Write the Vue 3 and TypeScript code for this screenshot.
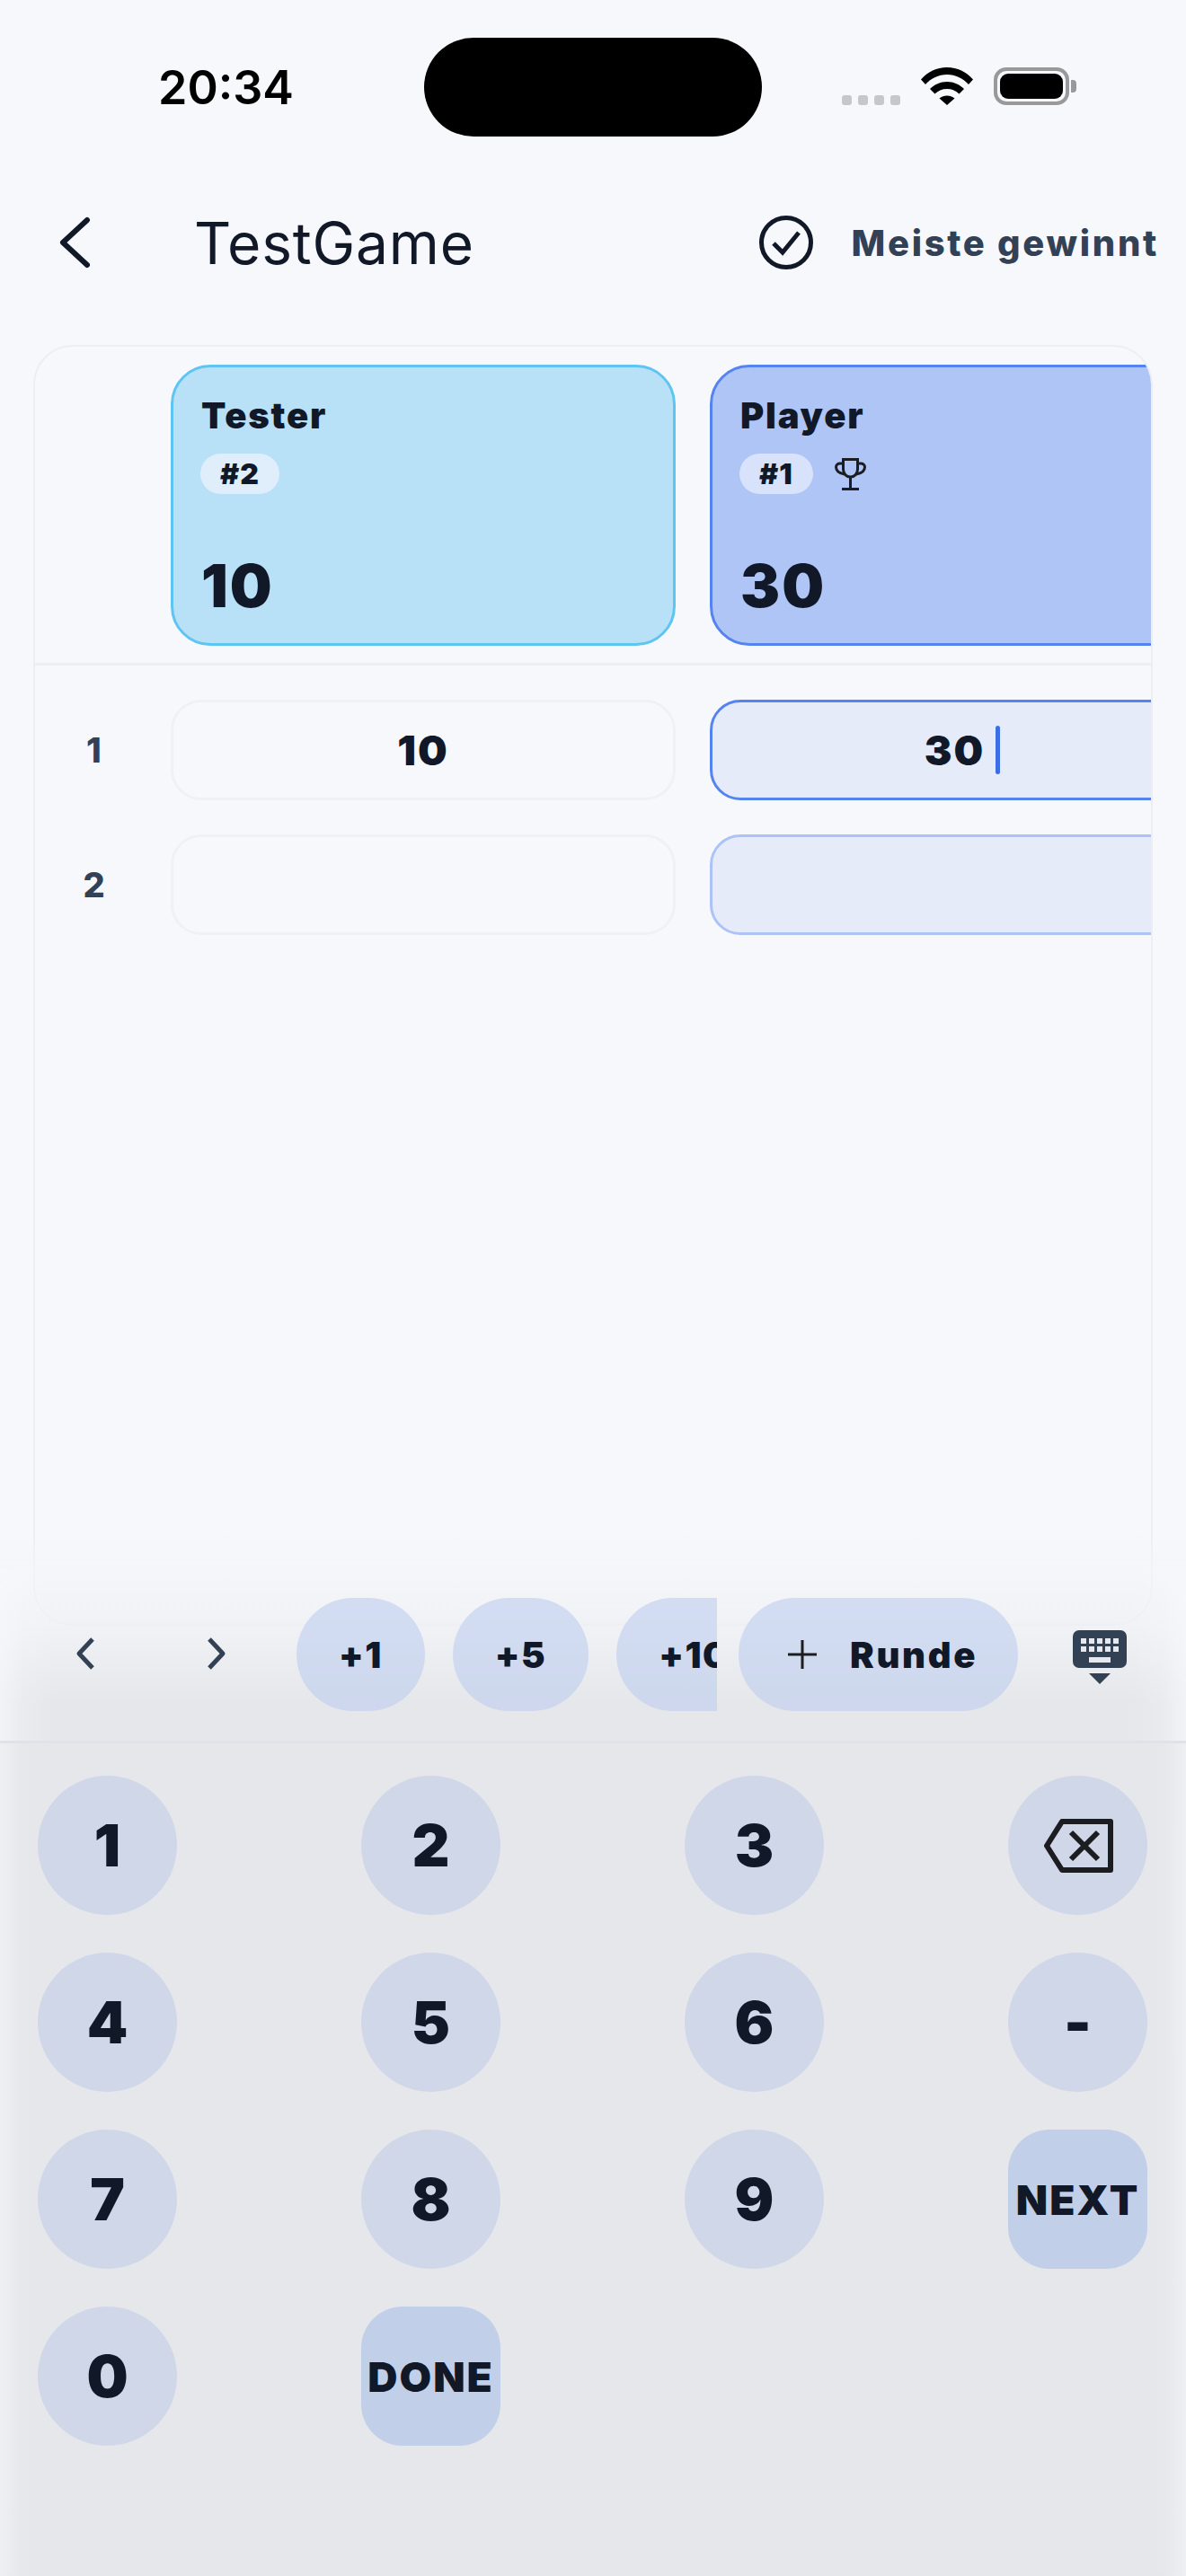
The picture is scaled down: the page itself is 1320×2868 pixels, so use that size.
<script setup lang="ts">
interface Player {
  name: string
  rank: number
  total: number
  lead: boolean
}

const players: Player[] = [
  { name: 'Tester', rank: 2, total: 10, lead: false },
  { name: 'Player', rank: 1, total: 30, lead: true },
]

const rounds = [
  { no: 1, values: ['10', '30'] },
  { no: 2, values: ['', ''] },
]

const quick = ['+1', '+5', '+10']
const keys = ['1', '2', '3', 'back', '4', '5', '6', '-', '7', '8', '9', 'NEXT', '0', 'DONE']
const isAction = (k: string) => k === 'NEXT' || k === 'DONE'
</script>

<template>
  <div class="screen">
    <div class="status">
      <span class="time">20:34</span>
      <div class="island"></div>
      <div class="status-icons">
        <div class="dots"><i></i><i></i><i></i><i></i></div>
        <svg class="wifi" width="58" height="42" viewBox="0 0 58 42">
          <path d="M0 13.500C7.500 5 17.500 0 29 0s21.500 5 29 13.500l-5 5.500C46.500 12 38.500 8 29 8S11.500 12 5 19z" />
          <path d="M10 24c5-5 11.500-8 19-8s14 3 19 8l-5.500 5.500C39 26 34.500 24 29 24s-10 2-13.500 5.500z" />
          <path d="M20.500 34.500C23 32.500 25.800 31.500 29 31.500s6 1 8.500 3L29 42z" />
        </svg>
        <div class="battery"><div class="battery-fill"></div></div>
        <div class="battery-tip"></div>
      </div>
    </div>

    <header class="topbar">
      <svg class="back" width="40" height="60" viewBox="0 0 40 60" fill="none">
        <path d="M33 5 6 30l27 25" stroke="#111827" stroke-width="6" stroke-linecap="round" stroke-linejoin="round" />
      </svg>
      <h1 class="title">TestGame</h1>
      <svg class="check" width="60" height="60" viewBox="0 0 60 60" fill="none">
        <circle cx="30" cy="30" r="27.500" stroke="#111827" stroke-width="5" />
        <path d="M16 31l10 10 18-22" stroke="#111827" stroke-width="5" />
      </svg>
      <span class="mode">Meiste gewinnt</span>
    </header>

    <main class="board">
      <div class="head-row">
        <div class="label-col"></div>
        <div
          v-for="p in players"
          :key="p.name"
          class="player"
          :class="{ lead: p.lead }"
        >
          <div class="player-name">{{ p.name }}</div>
          <div class="player-rank">
            <span class="chip">#{{ p.rank }}</span>
            <svg v-if="p.lead" class="trophy" width="35" height="36" viewBox="0 0 35 36" fill="none" stroke="#1c1d20" stroke-width="3">
              <path d="M9.500 1.500h16v11c0 5-3.500 8.500-8 8.500s-8-3.500-8-8.500z" />
              <path d="M9.500 6H6C3.500 6 1.500 7.500 1.500 10c0 4 3.500 7 9.500 8M25.500 6H29c2.500 0 4.500 1.500 4.500 4 0 4-3.500 7-9.500 8" />
              <path d="M17.500 21v13M8 34.500h19" />
            </svg>
          </div>
          <div class="player-total">{{ p.total }}</div>
        </div>
      </div>

      <div v-for="r in rounds" :key="r.no" class="round">
        <div class="label-col round-no">{{ r.no }}</div>
        <div
          v-for="(v, i) in r.values"
          :key="i"
          class="cell"
          :class="{ col: i === 1, active: r.no === 1 && i === 1 }"
        >
          <span>{{ v }}</span>
          <i v-if="r.no === 1 && i === 1" class="caret"></i>
        </div>
      </div>
    </main>

    <section class="panel">
      <div class="tools">
        <svg class="nav" width="24" height="36" viewBox="0 0 24 36" fill="none">
          <path d="M20 2 5 18l15 16" stroke="#334155" stroke-width="5" stroke-linejoin="round" />
        </svg>
        <svg class="nav next" width="24" height="36" viewBox="0 0 24 36" fill="none">
          <path d="M4 2l15 16L4 34" stroke="#334155" stroke-width="5" stroke-linejoin="round" />
        </svg>
        <div class="quick">
          <button v-for="q in quick" :key="q" class="pill">{{ q }}</button>
        </div>
        <button class="pill round-btn">
          <svg width="34" height="34" viewBox="0 0 34 34" fill="none">
            <path d="M17 1v32M1 17h32" stroke="#1c1d20" stroke-width="3" />
          </svg>
          <span>Runde</span>
        </button>
        <svg class="kbd" width="60" height="60" viewBox="0 0 60 60">
          <rect width="60" height="42" rx="7" fill="#334155" />
          <g fill="#e6e8ef">
            <rect x="9" y="9" width="6" height="6" />
            <rect x="18" y="9" width="6" height="6" />
            <rect x="27" y="9" width="6" height="6" />
            <rect x="36" y="9" width="6" height="6" />
            <rect x="45" y="9" width="6" height="6" />
            <rect x="9" y="18" width="6" height="6" />
            <rect x="18" y="18" width="6" height="6" />
            <rect x="27" y="18" width="6" height="6" />
            <rect x="36" y="18" width="6" height="6" />
            <rect x="45" y="18" width="6" height="6" />
            <rect x="18" y="30" width="24" height="6" />
          </g>
          <path d="M18 48h24L30 60z" fill="#334155" />
        </svg>
      </div>
      <div class="pad">
        <button
          v-for="k in keys"
          :key="k"
          class="key"
          :class="{ action: isAction(k) }"
        >
          <svg v-if="k === 'back'" width="78" height="60" viewBox="0 0 78 60" fill="none">
            <path d="M21 3h54v54H21L4 30z" stroke="#1c1d20" stroke-width="6" stroke-linejoin="round" />
            <path d="M31 15l30 30M61 15 31 45" stroke="#1c1d20" stroke-width="6" />
          </svg>
          <template v-else>{{ k }}</template>
        </button>
      </div>
    </section>
  </div>
</template>

<style scoped>
.screen {
  position: relative;
  width: 1320px;
  height: 2868px;
  overflow: hidden;
  background: #f7f8fc;
  font-family: Inter, "Noto Sans", sans-serif;
  color: #111827;
}

.status {
  height: 192px;
  display: flex;
  align-items: flex-start;
  padding-top: 42px;
  box-sizing: border-box;
}

.time {
  width: 472px;
  padding-left: 176px;
  box-sizing: border-box;
  margin-top: 27px;
  font-size: 52px;
  font-weight: 600;
  color: #000;
  line-height: 58px;
}

.island {
  width: 376px;
  height: 110px;
  border-radius: 55px;
  background: #000;
}

.status-icons {
  display: flex;
  align-items: flex-end;
  height: 42px;
  margin: 33px 0 0 89px;
}

.dots {
  display: flex;
  gap: 7px;
  margin-right: 23px;
}

.dots i {
  width: 11px;
  height: 11px;
  border-radius: 3px;
  background: #c6c7c9;
}

.wifi {
  fill: #000;
  margin-right: 23px;
}

.battery {
  width: 84px;
  height: 42px;
  border: 4px solid #999;
  border-radius: 14px;
  box-sizing: border-box;
  padding: 3px;
}

.battery-fill {
  height: 100%;
  border-radius: 9px;
  background: #000;
}

.battery-tip {
  width: 6px;
  height: 14px;
  margin: 0 0 14px 2px;
  border-radius: 0 4px 4px 0;
  background: #999;
}

.topbar {
  display: flex;
  align-items: center;
  height: 156px;
  padding-right: 30px;
}

.back {
  margin-left: 64px;
}

.title {
  margin: 0 0 0 112px;
  flex: 1;
  font-size: 64px;
  font-weight: 400;
  letter-spacing: 0.8px;
}

.check {
  margin-right: 42px;
}

.mode {
  font-size: 40px;
  font-weight: 800;
  letter-spacing: 2.7px;
  color: #334155;
  white-space: nowrap;
}

.board {
  margin: 36px 0 0 37px;
  width: 1246px;
  height: 1426px;
  box-sizing: border-box;
  border: 2px solid #eceef4;
  border-radius: 44px;
  overflow: hidden;
}

.head-row {
  display: flex;
  height: 355px;
  padding-top: 20px;
  box-sizing: border-box;
  border-bottom: 3px solid #eceef4;
}

.label-col {
  width: 151px;
  flex: none;
}

.player,
.cell {
  width: 562px;
  flex: none;
  box-sizing: border-box;
  margin-right: 38px;
}

.player {
  height: 313px;
  padding: 30px 31px 28px;
  border: 3px solid #5ec5f2;
  border-radius: 44px;
  background: #b8e1f8;
  display: flex;
  flex-direction: column;
}

.player.lead {
  border-color: #5583ef;
  background: #afc5f6;
}

.player-name {
  font-size: 40px;
  font-weight: 900;
  letter-spacing: 1.8px;
  line-height: 48px;
}

.player-rank {
  display: flex;
  align-items: center;
  gap: 24px;
  margin-top: 18px;
}

.chip {
  height: 45px;
  padding: 0 22px;
  margin-left: -1px;
  border-radius: 23px;
  background: #dfeefa;
  font-size: 32px;
  font-weight: 900;
  letter-spacing: 1px;
  line-height: 45px;
}

.lead .chip {
  background: #d8e2fa;
}

.player-total {
  margin-top: auto;
  font-size: 66px;
  font-weight: 900;
  letter-spacing: 2px;
  line-height: 72px;
}

.round {
  display: flex;
  align-items: center;
  height: 150px;
}

.head-row + .round {
  margin-top: 19px;
}

.round-no {
  text-align: center;
  padding-right: 20px;
  box-sizing: border-box;
  font-size: 38px;
  font-weight: 800;
  color: #334155;
}

.cell {
  height: 112px;
  border: 3px solid #f0f1f5;
  border-radius: 34px;
  display: flex;
  align-items: center;
  justify-content: center;
  font-size: 46px;
  font-weight: 900;
  letter-spacing: 2px;
}

.cell.col {
  background: #e6ebfa;
  border-color: #aec3f5;
}

.cell.active {
  border-color: #5583ef;
}

.caret {
  width: 5px;
  height: 54px;
  margin-left: 12px;
  background: #3d6ee8;
  border-radius: 3px;
}

.panel {
  position: absolute;
  left: 0;
  right: 0;
  top: 1746px;
  bottom: 0;
  background:
    linear-gradient(90deg, rgba(247, 248, 252, 0.4), rgba(247, 248, 252, 0) 60px) 0 0 / 100% 195px no-repeat,
    linear-gradient(270deg, rgba(247, 248, 252, 0.4), rgba(247, 248, 252, 0) 60px) 0 0 / 100% 195px no-repeat,
    linear-gradient(90deg, rgba(247, 248, 252, 0.5), rgba(247, 248, 252, 0) 26px, rgba(247, 248, 252, 0) 1294px, rgba(247, 248, 252, 0.5)),
    linear-gradient(180deg, rgba(244, 245, 249, 0.55), rgba(238, 240, 244, 0.75) 64px, #e5e7ea 150px);
}

.panel::before {
  content: "";
  position: absolute;
  left: 0;
  right: 0;
  top: -46px;
  height: 46px;
  background: linear-gradient(180deg, rgba(244, 245, 249, 0), rgba(244, 245, 249, 0.6));
}

.tools {
  position: relative;
  height: 195px;
  box-sizing: border-box;
  padding-top: 33px;
  border-bottom: 3px solid #dfe2ea;
  display: flex;
  align-items: flex-start;
}

.nav {
  margin: 44px 0 0 83px;
}

.nav.next {
  margin-left: 122px;
}

.quick {
  display: flex;
  gap: 31px;
  width: 468px;
  margin-left: 77px;
  overflow: hidden;
  flex: none;
}

.pill {
  height: 126px;
  flex: none;
  padding: 0 47px;
  border: none;
  border-radius: 63px;
  background: rgba(190, 205, 238, 0.6);
  font-family: inherit;
  font-size: 40px;
  font-weight: 900;
  letter-spacing: 1.5px;
  color: #111827;
}

.round-btn {
  display: flex;
  align-items: center;
  gap: 36px;
  width: 311px;
  margin-left: 24px;
  padding: 0 0 0 54px;
  box-sizing: border-box;
  letter-spacing: 2.7px;
}

.kbd {
  margin: 36px 0 0 61px;
}

.pad {
  display: grid;
  grid-template-columns: repeat(4, 155px);
  column-gap: 205px;
  row-gap: 42px;
  padding: 36px 0 0 42px;
}

.key {
  width: 155px;
  height: 155px;
  padding: 0;
  border: none;
  border-radius: 50%;
  background: #d0d7e9;
  display: flex;
  align-items: center;
  justify-content: center;
  font-family: inherit;
  font-size: 65px;
  font-weight: 900;
  color: #111827;
}

.key.action {
  border-radius: 46px;
  background: #c2cfe9;
  font-size: 46px;
  letter-spacing: 2px;
}
</style>
